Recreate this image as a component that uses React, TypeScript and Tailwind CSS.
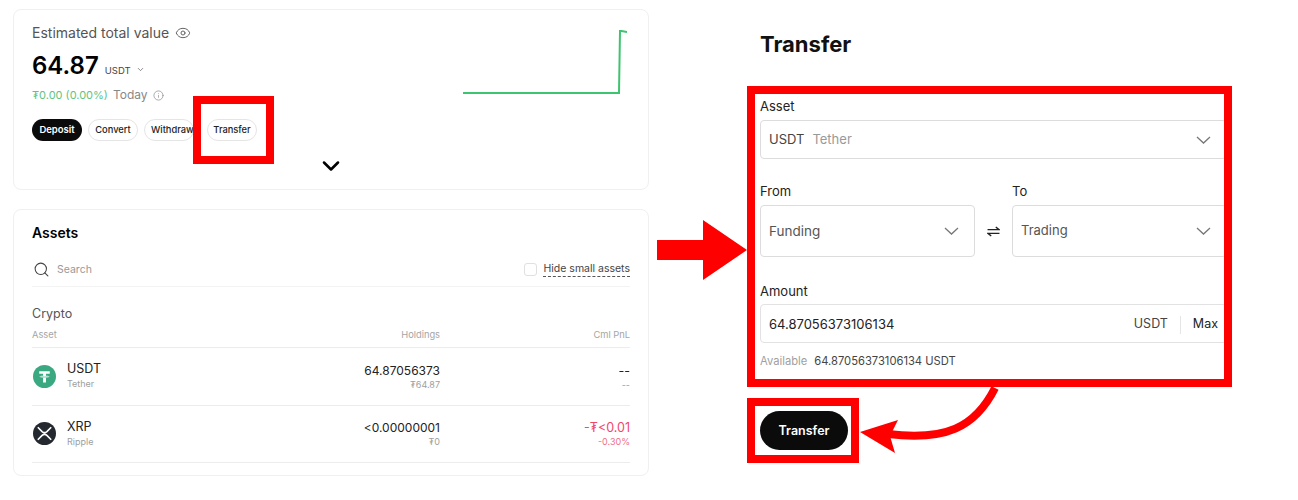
import React from 'react';
import { ChevronDown, Eye, Info, Search } from 'lucide-react';

function TetherIcon() {
  return (
    <svg viewBox="0 0 24 24" className="w-[23px] h-[23px] shrink-0">
      <circle cx="12" cy="12" r="12" fill="#3aa981" />
      <path d="M6.5 6.5h11v2.7h-4v2c2 .1 3.6.5 3.6 1s-1.6.9-3.6 1v5h-3v-5c-2-.1-3.6-.5-3.6-1s1.6-.9 3.6-1v-2h-4z" fill="#fff" />
      <path d="M7.5 12.2c1.5.5 7.5.5 9 0" stroke="#3aa981" strokeWidth="0.7" fill="none" />
    </svg>
  );
}

function XrpIcon() {
  return (
    <svg viewBox="0 0 24 24" className="w-[23px] h-[23px] shrink-0">
      <circle cx="12" cy="12" r="12" fill="#23292f" />
      <path d="M5 5.5 L9.5 10 Q12 12.3 14.5 10 L19 5.5 M5 18.5 L9.5 14 Q12 11.7 14.5 14 L19 18.5" stroke="#fff" strokeWidth="1.7" fill="none" />
    </svg>
  );
}

function SwapIcon() {
  return (
    <svg viewBox="0 0 14 12" className="w-[13px] h-[11px] mx-[12px] shrink-0" fill="none" stroke="#222" strokeWidth="1.5">
      <path d="M0.5 4H13L9.5 1" />
      <path d="M13.5 8H1L4.5 11" />
    </svg>
  );
}

function Pill({ label, className }: { label: string; className?: string }) {
  return (
    <div className={`h-[22px] w-[50px] rounded-full border border-[#e5e5e5] flex items-center justify-center text-[9.3px] font-medium text-[#222] whitespace-nowrap ${className ?? ''}`}>
      {label}
    </div>
  );
}

function SelectBox({ children, className }: { children: React.ReactNode; className?: string }) {
  return (
    <div className={`border border-[#dcdcdc] rounded flex items-center justify-between pl-[8px] pr-[15px] ${className ?? ''}`}>
      <div className="flex items-center gap-[8px]">{children}</div>
      <svg viewBox="0 0 15 8" className="w-[15px] h-[8px]" fill="none" stroke="#777" strokeWidth="1.3">
        <path d="M1 1L7.5 7L14 1" />
      </svg>
    </div>
  );
}

const rows = [
  { icon: <TetherIcon />, sym: 'USDT', name: 'Tether', hold: '64.87056373', fiat: '₮64.87', pnl: '--', pct: '--', red: false },
  { icon: <XrpIcon />, sym: 'XRP', name: 'Ripple', hold: '<0.00000001', fiat: '₮0', pnl: '-₮<0.01', pct: '-0.30%', red: true },
];

export default function App() {
  return (
    <div className="w-[1298px] h-[500px] bg-white overflow-hidden flex font-['Inter',sans-serif] relative">
      {/* Left: account overview */}
      <div className="w-[636px] ml-[13px] mt-[9px] flex flex-col gap-[19px] shrink-0">
        <div className="h-[181px] border border-[#f0f0f0] rounded-lg flex pl-[18px] pr-[21px] pt-[13px]">
          <div className="flex-1 flex flex-col">
            <div className="flex items-center gap-[6px] text-[14px] text-[#555] leading-[20px]">
              Estimated total value <Eye className="w-[16px] h-[16px] text-[#666]" strokeWidth={1.5} />
            </div>
            <div className="flex items-baseline mt-[6px] leading-[34px]">
              <span className="text-[24px] font-semibold text-black">64.87</span>
              <span className="text-[9.5px] text-[#444] ml-[6px]">USDT</span>
              <ChevronDown className="w-[9px] h-[9px] text-[#666] ml-[5px]" />
            </div>
            <div className="flex items-center -mt-[2px] text-[12px] leading-[18px]">
              <span className="text-[#5fc47f] text-[11px]">₮0.00 (0.00%)</span>
              <span className="text-[#888] ml-[5px]">Today</span>
              <Info className="w-[11px] h-[11px] text-[#888] ml-[5px]" strokeWidth={1.5} />
            </div>
            <div className="flex mt-[15px] gap-[6px]">
              <div className="h-[22px] w-[50px] rounded-full bg-[#0b0b0b] text-white text-[9.5px] font-semibold flex items-center justify-center">Deposit</div>
              <Pill label="Convert" />
              <Pill label="Withdraw" className="justify-start pl-[6px]" />
              <Pill label="Transfer" className="ml-[7px]" />
            </div>
            <div className="self-start mt-[11px] ml-[285px]">
              <ChevronDown className="w-[28px] h-[28px] text-black" strokeWidth={2.2} />
            </div>
          </div>
          <svg viewBox="0 0 166 70" className="w-[166px] h-[70px] mt-[6px] shrink-0" fill="none">
            <path d="M2 64H158L159 2H160.5L166 3" stroke="#3cc46e" strokeWidth="2" />
          </svg>
        </div>

        <div className="h-[267px] border border-[#f0f0f0] rounded-lg pl-[18px] pr-[18px] pt-[13px]">
          <div className="text-[14px] font-semibold text-black leading-[20px]">Assets</div>
          <div className="h-[34px] mt-[10px] border-b border-[#f3f3f3] flex items-center justify-between">
            <div className="flex items-center gap-[7px] pl-[1px]">
              <Search className="w-[17px] h-[17px] text-[#444]" strokeWidth={1.5} />
              <span className="text-[10.5px] text-[#999]">Search</span>
            </div>
            <div className="flex items-center gap-[6px]">
              <div className="w-[13px] h-[13px] border border-[#e0e0e0] rounded-[3px]" />
              <span className="text-[10.5px] text-[#444] border-b border-dashed border-[#555] leading-[14px]">Hide small assets</span>
            </div>
          </div>
          <div className="text-[12.5px] text-[#555] mt-[18px] leading-[18px]">Crypto</div>
          <div className="flex justify-between text-[9.3px] text-[#a5a5a5] h-[24px] items-center pb-[2px] mt-[1px] border-b border-[#ececec]">
            <span className="w-[200px]">Asset</span>
            <span className="w-[208px] text-right">Holdings</span>
            <span className="w-[190px] text-right">Cml PnL</span>
          </div>
          {rows.map((r) => (
            <div key={r.sym} className="h-[57.5px] flex items-center border-b border-[#ececec]">
              <div className="w-[200px] flex items-center gap-[11px] pl-[1px]">
                {r.icon}
                <div className="flex flex-col">
                  <span className="text-[12.5px] text-[#222] leading-[16px]">{r.sym}</span>
                  <span className="text-[9px] text-[#a0a0a0] leading-[14px]">{r.name}</span>
                </div>
              </div>
              <div className="w-[208px] text-right flex flex-col">
                <span className="text-[12px] text-[#222] leading-[16px]">{r.hold}</span>
                <span className="text-[9px] text-[#a0a0a0] leading-[11px]">{r.fiat}</span>
              </div>
              <div className="w-[190px] text-right flex flex-col">
                <span className={`text-[12.5px] leading-[16px] ${r.red ? 'text-[#f0476a]' : 'text-[#222]'}`}>{r.pnl}</span>
                <span className={`text-[9px] leading-[11px] ${r.red ? 'text-[#f0708a]' : 'text-[#a0a0a0]'}`}>{r.pct}</span>
              </div>
            </div>
          ))}
        </div>
      </div>

      {/* Right: transfer form */}
      <div className="ml-[98px] w-[485px] shrink-0 flex flex-col">
        <h1 className="ml-[13px] mt-[29px] text-[22px] font-bold text-[#111] leading-[30px]">Transfer</h1>
        <div className="mt-[27px] h-[301px] border-[8px] border-[#ff0000] overflow-hidden pl-[5px]">
          <div className="w-[467px]">
            <div className="text-[13px] text-[#222] leading-[18px] mt-[3px]">Asset</div>
            <SelectBox className="h-[39px] mt-[5px] text-[13px]">
              <span className="text-[#444]">USDT</span>
              <span className="text-[#999]">Tether</span>
            </SelectBox>
            <div className="flex items-start mt-[23px]">
              <div className="flex flex-col w-[215px]">
                <div className="text-[13px] text-[#222] leading-[18px] h-[23px]">From</div>
                <SelectBox className="h-[52px] text-[13.5px] text-[#555]">Funding</SelectBox>
              </div>
              <div className="h-[75px] pt-[23px] flex items-center"><SwapIcon /></div>
              <div className="flex flex-col flex-1">
                <div className="text-[13px] text-[#222] leading-[18px] h-[23px]">To</div>
                <SelectBox className="h-[52px] text-[13px] text-[#555]">Trading</SelectBox>
              </div>
            </div>
            <div className="text-[13px] text-[#222] leading-[18px] mt-[25px]">Amount</div>
            <div className="h-[39px] mt-[4px] pt-[2px] border border-[#e2e2e2] rounded flex items-center justify-between pl-[8px] pr-[8px] text-[13px] text-[#222]">
              <span>64.87056373106134</span>
              <span className="flex items-center">
                <span className="text-[#444] text-[12.5px]">USDT</span>
                <span className="w-px h-[18px] bg-[#e5e5e5] mx-[12px]" />
                <span className="text-[#222] text-[12.5px]">Max</span>
              </span>
            </div>
            <div className="flex items-center gap-[7px] mt-[10px] text-[11.2px] leading-[16px]">
              <span className="text-[#a0a0a0]">Available</span>
              <span className="text-[#444]">64.87056373106134 USDT</span>
            </div>
          </div>
        </div>
        <div className="mt-[11px] w-[112px] h-[65px] border-[8px] border-[#ff0000] flex items-center pl-[5px]">
          <div className="w-[88px] h-[39px] pt-[1px] rounded-full bg-[#0b0b0b] text-white text-[12.5px] font-semibold flex items-center justify-center">Transfer</div>
        </div>
      </div>

      {/* Red annotations laid over the screenshot */}
      <div className="absolute left-[193px] top-[96px] w-[81px] h-[68px] border-[8px] border-[#ff0000]" />
      <svg className="absolute left-0 top-0 pointer-events-none" width="1298" height="500" fill="none">
        <polygon points="657,240 703,240 703,220 747,250 703,280 703,260 657,260" fill="#ff0000" />
        <path d="M995 388C975 428 945 441 888 434" stroke="#ff0000" strokeWidth="8" />
        <polygon points="860,432 898,420 890,436 895,453" fill="#ff0000" />
      </svg>
    </div>
  );
}
